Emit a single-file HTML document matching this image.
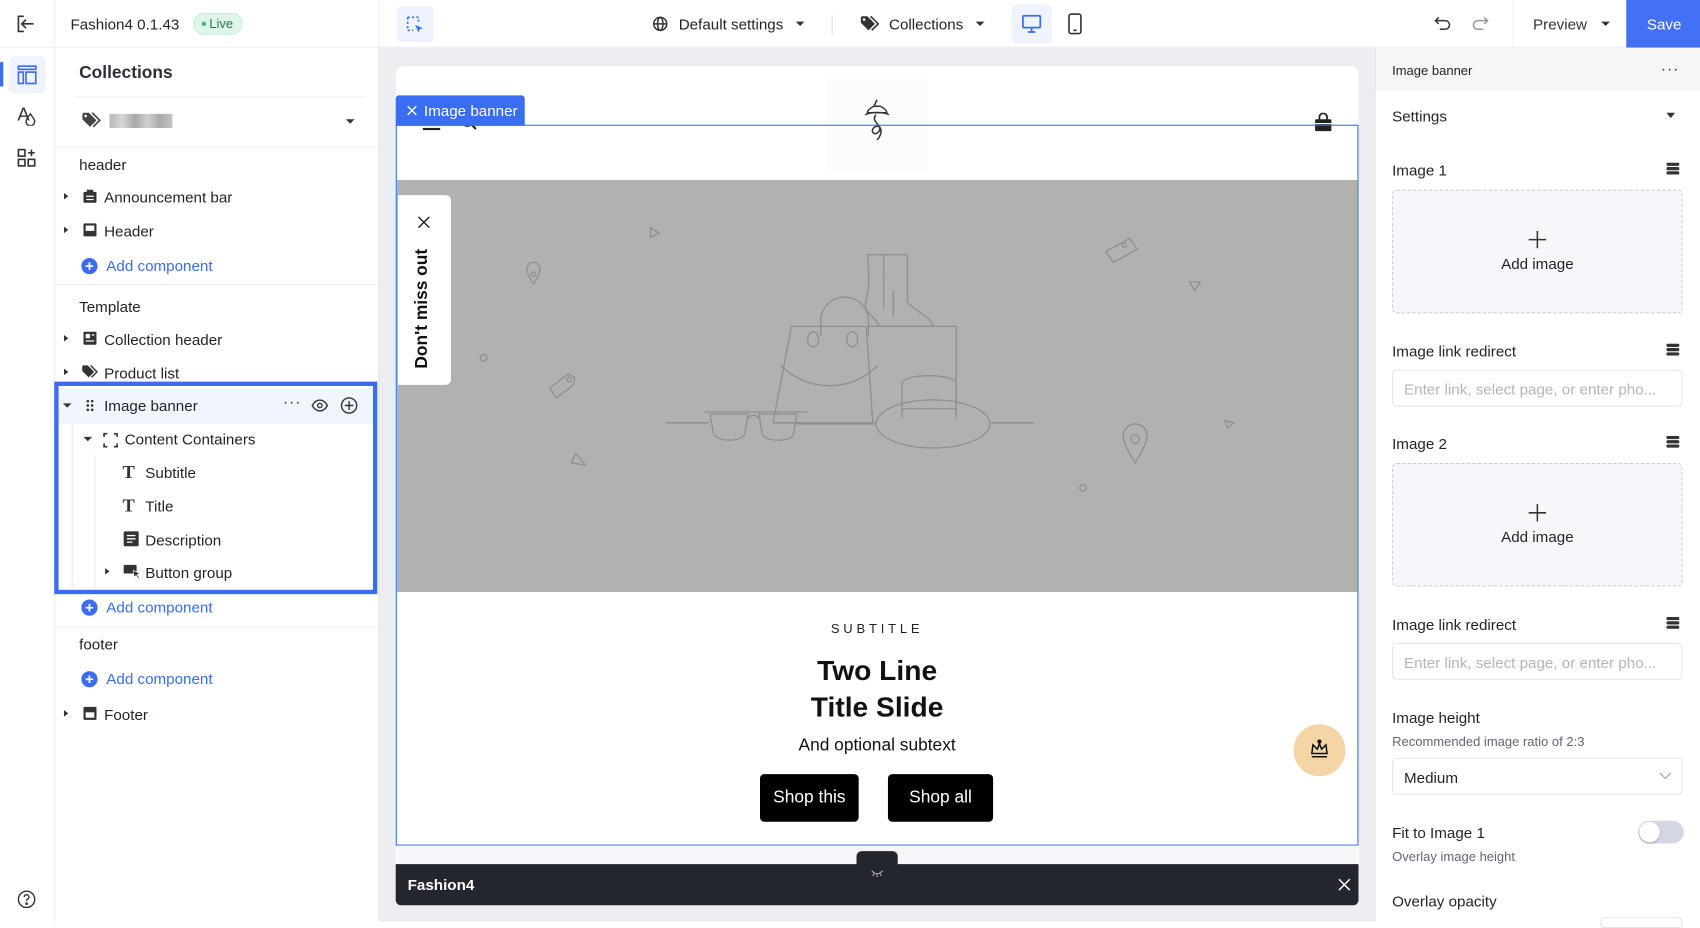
<!DOCTYPE html>
<html><head><meta charset="utf-8"><style>
*{box-sizing:border-box;margin:0;padding:0}
html,body{width:1700px;height:922px;overflow:hidden;background:#fff}
#root{position:absolute;left:0;top:0;width:1568px;height:850px;transform:scale(1.08418);transform-origin:0 0;font-family:"Liberation Sans",sans-serif;color:#1f2329;font-size:14px}
.a{position:absolute}
.t{position:absolute;white-space:nowrap;line-height:1}
.ic{position:absolute}
.tri{position:absolute;width:0;height:0;border-top:3.5px solid transparent;border-bottom:3.5px solid transparent;border-left:4px solid #333}
.trid{position:absolute;width:0;height:0;border-left:4px solid transparent;border-right:4px solid transparent;border-top:4px solid #333}
.add{color:#3a6cf4}
.lbl{font-size:14px;color:#1f2329}
.drop{position:absolute;left:1284px;width:268px;height:114px;border:1px dashed #c9ccd6;border-radius:4px;background:#f6f7fb}
.inp{position:absolute;left:1284px;width:268px;height:34px;border:1px solid #e3e5ea;border-radius:4px;background:#fff}
</style></head><body><div id="root">

<div class="a" style="left:0;top:0;width:1568px;height:44px;background:#fff;border-bottom:1px solid #eceef2"></div>
<div class="a" style="left:50px;top:0;width:1px;height:850px;background:#eceef2"></div>
<div class="a" style="left:349px;top:0;width:1px;height:44px;background:#eceef2"></div>
<svg class="ic" style="left:15px;top:13px" width="18" height="18" viewBox="0 0 18 18" fill="none" stroke="#333" stroke-width="1.5"><path d="M7 2H2v14h5M16 9H6M9 5L5 9l4 4"/></svg>
<div class="t" style="left:65px;top:15px;font-size:14px;color:#1f2329">Fashion4 0.1.43</div>
<div class="a" style="left:178px;top:12px;width:46px;height:20px;border-radius:10px;background:#dff5e8;border:1px solid #c9eed8"></div>
<div class="a" style="left:186px;top:20px;width:4px;height:4px;border-radius:2px;background:#3fb872"></div>
<div class="t" style="left:193px;top:16px;font-size:12px;color:#2a7a4c">Live</div>

<div class="a" style="left:366px;top:6px;width:34px;height:33px;border-radius:4px;background:#eef3fe"></div>
<svg class="ic" style="left:374px;top:14px" width="18" height="18" viewBox="0 0 18 18" fill="none" stroke="#3a6cf4" stroke-width="1.5"><path d="M2 2h10v5M2 2v12h5" stroke-dasharray="2 2"/><path d="M9 9l7 3-3 1-1 3z" fill="#3a6cf4" stroke="none"/></svg>

<svg class="ic" style="left:602px;top:15px" width="14" height="14" viewBox="0 0 14 14" fill="none" stroke="#333" stroke-width="1.4"><circle cx="7" cy="7" r="6"/><ellipse cx="7" cy="7" rx="2.5" ry="6"/><path d="M1 7h12"/></svg>
<div class="t" style="left:626px;top:15px;font-size:14px">Default settings</div>
<div class="trid" style="left:734px;top:20px"></div>
<div class="a" style="left:767px;top:14px;width:1px;height:18px;background:#dcdfe6"></div>
<svg class="ic" style="left:793px;top:14px" width="20" height="16" viewBox="0 0 20 16"><path d="M1 2v5l7 7 6-6-7-7H2z" fill="#333"/><path d="M10 1l7 7-6 6" fill="none" stroke="#333" stroke-width="1.5"/><circle cx="4" cy="4" r="1.2" fill="#fff"/></svg>
<div class="t" style="left:820px;top:15px;font-size:14px">Collections</div>
<div class="trid" style="left:900px;top:20px"></div>
<div class="a" style="left:933px;top:4px;width:37px;height:36px;border-radius:4px;background:#eef3fe"></div>
<svg class="ic" style="left:942px;top:13px" width="19" height="18" viewBox="0 0 19 18" fill="none" stroke="#3a6cf4" stroke-width="1.6"><rect x="1.5" y="1.5" width="16" height="11" rx="1"/><path d="M9.5 13v3M6 16.5h7"/></svg>
<svg class="ic" style="left:985px;top:12px" width="13" height="20" viewBox="0 0 13 20" fill="none" stroke="#333" stroke-width="1.5"><rect x="1" y="1" width="11" height="18" rx="2"/><path d="M5 16h3"/></svg>

<svg class="ic" style="left:1323px;top:14px" width="16" height="16" viewBox="0 0 16 16" fill="none" stroke="#333" stroke-width="1.4"><path d="M4 2L1 5l3 3M1 5h9a4 4 0 010 8H5"/></svg>
<svg class="ic" style="left:1357px;top:14px" width="16" height="16" viewBox="0 0 16 16" fill="none" stroke="#999" stroke-width="1.4"><path d="M12 2l3 3-3 3M15 5H6a4 4 0 000 8h5"/></svg>
<div class="a" style="left:1395px;top:0;width:1px;height:44px;background:#eceef2"></div>
<div class="t" style="left:1414px;top:15px;font-size:14px;color:#333">Preview</div>
<div class="trid" style="left:1477px;top:20px"></div>
<div class="a" style="left:1500px;top:0;width:68px;height:44px;background:#4470f5"></div>
<div class="t" style="left:1519px;top:15px;font-size:14px;color:#fff">Save</div>

<div class="a" style="left:0;top:57px;width:3px;height:23px;background:#3a6cf4;border-radius:2px"></div>
<div class="a" style="left:8px;top:52px;width:34px;height:34px;border-radius:5px;background:#eef3fe"></div>
<svg class="ic" style="left:16px;top:60px" width="18" height="18" viewBox="0 0 18 18" fill="none" stroke="#3a6cf4" stroke-width="1.5"><rect x="1" y="1" width="16" height="3"/><rect x="1" y="6.5" width="4.5" height="10.5"/><rect x="8" y="6.5" width="9" height="10.5"/></svg>
<div class="t" style="left:16px;top:97px;font-size:17px;color:#333">A</div>
<svg class="ic" style="left:23px;top:104px" width="10" height="12" viewBox="0 0 10 12" fill="none" stroke="#333" stroke-width="1.3"><path d="M5 1C3 4 1 6 1 8a4 4 0 008 0c0-2-2-4-4-7z"/></svg>
<svg class="ic" style="left:16px;top:137px" width="17" height="17" viewBox="0 0 17 17" fill="none" stroke="#333" stroke-width="1.5"><rect x="1" y="1" width="6" height="6"/><rect x="1" y="10" width="6" height="6"/><rect x="10" y="10" width="6" height="6"/><path d="M13 1v6M10 4h6"/></svg>
<svg class="ic" style="left:16px;top:821px" width="17" height="17" viewBox="0 0 17 17" fill="none" stroke="#333" stroke-width="1.3"><circle cx="8.5" cy="8.5" r="7.5"/><path d="M6.3 6.5a2.2 2.2 0 114 1.2c-.8.6-1.8 1-1.8 2.2"/><circle cx="8.5" cy="12.5" r=".6" fill="#333"/></svg>

<div class="t" style="left:73px;top:60px;font-size:16px;font-weight:bold;color:#2a2f3a">Collections</div>
<div class="a" style="left:69px;top:89px;width:269px;height:1px;background:#eceef2"></div>
<svg class="ic" style="left:75px;top:103px" width="20" height="16" viewBox="0 0 20 16"><path d="M1 2v5l7 7 6-6-7-7H2z" fill="#444"/><path d="M10 1l7 7-6 6" fill="none" stroke="#444" stroke-width="1.5"/><circle cx="4" cy="4" r="1.2" fill="#fff"/></svg>
<div class="a" style="left:101px;top:105px;width:58px;height:13px;background:linear-gradient(90deg,#b8b8b8,#d6d6d6 20%,#a8a8a8 40%,#cfcfcf 60%,#aaa 80%,#c4c4c4)"></div>
<div class="trid" style="left:319px;top:110px"></div>
<div class="a" style="left:50px;top:135px;width:299px;height:1px;background:#eceef2"></div>
<div class="t" style="left:73px;top:145px">header</div>
<div class="tri" style="left:59px;top:178px"></div>
<svg class="ic" style="left:76px;top:174px" width="14" height="14" viewBox="0 0 14 14"><rect x="1" y="3" width="12" height="10" rx="1" fill="#333"/><rect x="4" y="1" width="6" height="3" fill="#333"/><path d="M3.5 7h7M3.5 10h7" stroke="#fff" stroke-width="1.2"/></svg>
<div class="t" style="left:96px;top:175px">Announcement bar</div>
<div class="tri" style="left:59px;top:209px"></div>
<svg class="ic" style="left:76px;top:205px" width="14" height="14" viewBox="0 0 14 14"><rect x="1" y="1" width="12" height="12" rx="1" fill="#333"/><rect x="3" y="3" width="8" height="5" fill="#fff"/></svg>
<div class="t" style="left:96px;top:206px">Header</div>
<svg class="ic" style="left:75px;top:238px" width="15" height="15" viewBox="0 0 15 15"><circle cx="7.5" cy="7.5" r="7.5" fill="#3a6cf4"/><path d="M7.5 4v7M4 7.5h7" stroke="#fff" stroke-width="1.6"/></svg>
<div class="t add" style="left:98px;top:238px">Add component</div>
<div class="a" style="left:50px;top:262px;width:299px;height:1px;background:#eceef2"></div>
<div class="t" style="left:73px;top:276px">Template</div>
<div class="tri" style="left:59px;top:309px"></div>
<svg class="ic" style="left:76px;top:305px" width="14" height="14" viewBox="0 0 14 14"><rect x="1" y="1" width="12" height="12" rx="1" fill="#333"/><rect x="3" y="3" width="4" height="4" fill="#fff"/><path d="M8.5 4h2.5M3 9.5h8" stroke="#fff" stroke-width="1.2"/></svg>
<div class="t" style="left:96px;top:306px">Collection header</div>
<div class="tri" style="left:59px;top:340px"></div>
<svg class="ic" style="left:75px;top:336px" width="17" height="14" viewBox="0 0 20 16"><path d="M1 2v5l7 7 6-6-7-7H2z" fill="#333"/><path d="M10 1l7 7-6 6" fill="none" stroke="#333" stroke-width="1.5"/></svg>
<div class="t" style="left:96px;top:337px">Product list</div>

<div class="a" style="left:54px;top:358px;width:290px;height:33px;background:#f1f5fe"></div>
<div class="a" style="left:50px;top:352px;width:298px;height:196px;border:4px solid #3a6cf4"></div>
<div class="a" style="left:66px;top:391px;width:1px;height:152px;background:#e3e5ea"></div>
<div class="a" style="left:87px;top:420px;width:1px;height:123px;background:#e3e5ea"></div>
<div class="trid" style="left:58px;top:372px"></div>
<svg class="ic" style="left:79px;top:368px" width="8" height="12" viewBox="0 0 8 12" fill="#333"><circle cx="2" cy="2" r="1.2"/><circle cx="6" cy="2" r="1.2"/><circle cx="2" cy="6" r="1.2"/><circle cx="6" cy="6" r="1.2"/><circle cx="2" cy="10" r="1.2"/><circle cx="6" cy="10" r="1.2"/></svg>
<div class="t" style="left:96px;top:367px">Image banner</div>
<div class="t" style="left:261px;top:363px;font-size:14px;letter-spacing:1px">···</div>
<svg class="ic" style="left:287px;top:368px" width="16" height="12" viewBox="0 0 16 12" fill="none" stroke="#333" stroke-width="1.3"><path d="M1 6c2-3.5 4.5-5 7-5s5 1.5 7 5c-2 3.5-4.5 5-7 5S3 9.5 1 6z"/><circle cx="8" cy="6" r="2"/></svg>
<svg class="ic" style="left:314px;top:366px" width="16" height="16" viewBox="0 0 16 16" fill="none" stroke="#333" stroke-width="1.3"><circle cx="8" cy="8" r="7"/><path d="M8 4v8M4 8h8"/></svg>
<div class="trid" style="left:77px;top:403px"></div>
<svg class="ic" style="left:95px;top:399px" width="14" height="14" viewBox="0 0 14 14" fill="none" stroke="#333" stroke-width="1.5"><path d="M1 4V1h3M10 1h3v3M13 10v3h-3M4 13H1v-3"/></svg>
<div class="t" style="left:115px;top:398px">Content Containers</div>
<div class="t" style="left:113px;top:427px;font-family:'Liberation Serif',serif;font-weight:bold;font-size:17px;color:#333">T</div>
<div class="t" style="left:134px;top:429px">Subtitle</div>
<div class="t" style="left:113px;top:458px;font-family:'Liberation Serif',serif;font-weight:bold;font-size:17px;color:#333">T</div>
<div class="t" style="left:134px;top:460px">Title</div>
<svg class="ic" style="left:114px;top:490px" width="14" height="14" viewBox="0 0 14 14"><rect x="0" y="0" width="14" height="14" rx="1.5" fill="#333"/><path d="M3 4h8M3 7h8M3 10h5" stroke="#fff" stroke-width="1.2"/></svg>
<div class="t" style="left:134px;top:491px">Description</div>
<div class="tri" style="left:97px;top:524px"></div>
<svg class="ic" style="left:114px;top:520px" width="16" height="15" viewBox="0 0 16 15"><rect x="0" y="1" width="12" height="8" rx="1" fill="#333"/><path d="M9 6l6 3-2.5 1 2 3-1 .8-2-3-2 1.5z" fill="#333" stroke="#fff" stroke-width=".6"/></svg>
<div class="t" style="left:134px;top:521px">Button group</div>
<svg class="ic" style="left:75px;top:553px" width="15" height="15" viewBox="0 0 15 15"><circle cx="7.5" cy="7.5" r="7.5" fill="#3a6cf4"/><path d="M7.5 4v7M4 7.5h7" stroke="#fff" stroke-width="1.6"/></svg>
<div class="t add" style="left:98px;top:553px">Add component</div>
<div class="a" style="left:50px;top:578px;width:299px;height:1px;background:#eceef2"></div>
<div class="t" style="left:73px;top:587px">footer</div>
<svg class="ic" style="left:75px;top:619px" width="15" height="15" viewBox="0 0 15 15"><circle cx="7.5" cy="7.5" r="7.5" fill="#3a6cf4"/><path d="M7.5 4v7M4 7.5h7" stroke="#fff" stroke-width="1.6"/></svg>
<div class="t add" style="left:98px;top:619px">Add component</div>
<div class="tri" style="left:59px;top:655px"></div>
<svg class="ic" style="left:76px;top:651px" width="14" height="14" viewBox="0 0 14 14"><rect x="1" y="1" width="12" height="12" rx="1" fill="#333"/><rect x="3" y="6" width="8" height="5" fill="#fff"/></svg>
<div class="t" style="left:96px;top:652px">Footer</div>

<div class="a" style="left:349px;top:44px;width:919px;height:806px;background:#eceef1;border-left:1px solid #e3e5ea"></div>
<div class="a" style="left:365px;top:61px;width:888px;height:736px;background:#fff;border-radius:8px 8px 0 0"></div>
<div class="a" style="left:762px;top:68px;width:94px;height:92px;background:#fcfcfc"></div>
<svg class="ic" style="left:792px;top:90px" width="34" height="46" viewBox="0 0 34 46" fill="none" stroke="#333" stroke-width="1.4"><path d="M17 2l-3 6 2 0M14 8c-4 2-6 4-6 6h18c0-2-2-4-6-6z"/><path d="M6 16c4-3 18-3 22 0"/><path d="M16 16c-6 6 8 10 2 16-4 4-8-2-3-5 6-3 8 6 2 12"/></svg>
<div class="a" style="left:390px;top:118px;width:16px;height:1.8px;background:#222"></div>
<svg class="ic" style="left:424px;top:109px" width="18" height="14" viewBox="0 0 18 14" fill="none" stroke="#222" stroke-width="2"><circle cx="7" cy="2" r="5"/><path d="M11 6l4 4"/></svg>
<svg class="ic" style="left:1212px;top:104px" width="17" height="18" viewBox="0 0 17 18"><rect x="1" y="6" width="15" height="11" rx="1" fill="#222"/><path d="M5 7V4a3.5 3.5 0 017 0v3" fill="none" stroke="#222" stroke-width="1.6"/><path d="M1 10h15" stroke="#fff" stroke-width="1"/></svg>

<div class="a" style="left:366px;top:166px;width:886px;height:380px;background:#b1b1b1"></div>
<svg class="ic" style="left:366px;top:166px" width="886" height="380" viewBox="366 166 886 380" fill="none" stroke="#8f8f8f" stroke-width="1.2">
<path d="M614 390h40M734 390h-4M735 391h73M914 390h40"/>
<path d="M730 301h69l6 89h-92z"/>
<path d="M757 310v-14a22 22 0 0144 0v14"/>
<ellipse cx="750" cy="313" rx="5" ry="7"/><ellipse cx="786" cy="313" rx="5" ry="7"/>
<path d="M720 337c25 25 65 25 90 0"/>
<path d="M800 301h82v80"/>
<path d="M800 235h37v44c10 10 20 12 24 22h-50c-4-10-12-10-13-20 2-10 5-15 2-46zM815 235v50M824 268v24"/>
<path d="M808 391a52 22 0 0 0 105 0a52 22 0 0 0-105 0"/><path d="M832 386v-32c0-10 50-10 50 0v32M832 377h50"/>
<path d="M650 380h95"/>
<path d="M655 382h35l-3 18c-2 8-26 8-29 0z"/><path d="M700 382h35l-3 18c-2 8-26 8-29 0z"/>
<path d="M690 386c3-4 7-4 10 0"/>
<path d="M486 248a6 6 0 0112 0c0 5-6 14-6 14s-6-9-6-14zM1036 402a11 11 0 0122 0c0 8-11 25-11 25s-11-17-11-25z"/>
<circle cx="492" cy="253" r="2"/><circle cx="1047" cy="405" r="4"/>
<circle cx="446" cy="330" r="3"/><circle cx="999" cy="450" r="3"/>
<path d="M600 210l8 5-8 4zM527 427l13 2-9 -11zM1097 260h10l-5 8zM1130 388l8 2-6 5z"/>
<path d="M507 358l17-13 6 3-1 7-16 12z"/><circle cx="525" cy="350" r="2"/>
<path d="M1020 232l22-12 7 10-22 12z"/><circle cx="1037" cy="226" r="2"/>
</svg>
<div class="a" style="left:367px;top:180px;width:49px;height:175px;background:#fff;border-radius:0 5px 5px 0"></div>
<svg class="ic" style="left:385px;top:199px" width="12" height="12" viewBox="0 0 12 12" stroke="#222" stroke-width="1.3"><path d="M1 1l10 10M11 1L1 11"/></svg>
<div class="t" style="left:382px;top:340px;transform:rotate(-90deg);transform-origin:0 0;font-size:16px;font-weight:bold;color:#111">Don't miss out</div>

<div class="a" style="left:365px;top:115px;width:888px;height:665px;border:1.5px solid #3a6cf4"></div>
<div class="a" style="left:365px;top:88px;width:119px;height:28px;background:#3a6cf4;border-radius:3px 3px 0 0"></div>
<svg class="ic" style="left:375px;top:97px" width="10" height="10" viewBox="0 0 10 10" stroke="#fff" stroke-width="1.3"><path d="M1 1l8 8M9 1L1 9"/></svg>
<div class="t" style="left:391px;top:95px;color:#fff;font-size:14px">Image banner</div>

<div class="t" style="left:0;width:1618px;text-align:center;top:574px;font-size:12px;letter-spacing:3.5px;color:#222">SUBTITLE</div>
<div class="t" style="left:0;width:1618px;text-align:center;top:601px;font-size:26px;font-weight:bold;color:#111;line-height:34px">Two Line<br>Title Slide</div>
<div class="t" style="left:0;width:1618px;text-align:center;top:680px;font-size:16px;color:#111">And optional subtext</div>
<div class="a" style="left:701px;top:714px;width:91px;height:44px;background:#000;border-radius:4px"></div>
<div class="t" style="left:701px;width:91px;text-align:center;top:728px;font-size:16px;color:#fff">Shop this</div>
<div class="a" style="left:819px;top:714px;width:97px;height:44px;background:#000;border-radius:4px"></div>
<div class="t" style="left:819px;width:97px;text-align:center;top:728px;font-size:16px;color:#fff">Shop all</div>
<div class="a" style="left:1193px;top:668px;width:48px;height:48px;border-radius:24px;background:#f4d6a6"></div>
<svg class="ic" style="left:1208px;top:681px" width="18" height="20" viewBox="0 0 18 20" fill="none" stroke="#111" stroke-width="1.4"><path d="M2 14l1-8 4 4 2-5 2 5 4-4 1 8zM2 17h14"/><circle cx="9" cy="3" r="1.2" fill="#111"/></svg>

<div class="a" style="left:366px;top:780px;width:886px;height:17px;background:#f4f6f9"></div>
<div class="a" style="left:790px;top:785px;width:38px;height:14px;background:#23252f;border-radius:5px 5px 0 0"></div>
<div class="a" style="left:365px;top:797px;width:888px;height:38px;background:#23252f;border-radius:0 0 5px 5px"></div>
<svg class="ic" style="left:802px;top:801px" width="14" height="8" viewBox="0 0 14 8" fill="none" stroke="#bbb" stroke-width="1"><path d="M2 2c3 4 7 4 10 0M4 5l-1 2M7 6v2M10 5l1 2"/></svg>
<div class="t" style="left:376px;top:809px;color:#fff;font-weight:bold;font-size:14px">Fashion4</div>
<svg class="ic" style="left:1234px;top:810px" width="12" height="12" viewBox="0 0 12 12" stroke="#fff" stroke-width="1.4"><path d="M1 1l10 10M11 1L1 11"/></svg>

<div class="a" style="left:1268px;top:44px;width:300px;height:40px;background:#f5f6f8"></div>
<div class="a" style="left:1268px;top:44px;width:1px;height:806px;background:#e3e5ea"></div>
<div class="t" style="left:1284px;top:59px;font-size:12px;color:#1f2329">Image banner</div>
<div class="t" style="left:1532px;top:56px;font-size:14px;letter-spacing:1px">···</div>
<div class="t" style="left:1284px;top:100px;font-size:14px">Settings</div>
<div class="trid" style="left:1537px;top:104px;border-top-width:5px"></div>
<svg class="ic" style="left:1537px;top:150px" width="12" height="11" viewBox="0 0 12 11" fill="#333"><rect x="0" y="0" width="12" height="3" rx="1.5"/><rect x="0" y="4" width="12" height="3" rx="1.5"/><rect x="0" y="8" width="12" height="3" rx="1.5"/></svg>
<div class="t lbl" style="left:1284px;top:150px">Image 1</div>
<div class="drop" style="top:175px"></div>
<svg class="ic" style="left:1409px;top:212px" width="18" height="18" viewBox="0 0 18 18" stroke="#333" stroke-width="1.4"><path d="M9 1v16M1 9h16"/></svg>
<div class="t" style="left:1284px;width:268px;text-align:center;top:236px">Add image</div>
<div class="t lbl" style="left:1284px;top:317px">Image link redirect</div>
<svg class="ic" style="left:1537px;top:317px" width="12" height="11" viewBox="0 0 12 11" fill="#333"><rect x="0" y="0" width="12" height="3" rx="1.5"/><rect x="0" y="4" width="12" height="3" rx="1.5"/><rect x="0" y="8" width="12" height="3" rx="1.5"/></svg>
<div class="inp" style="top:341px"></div>
<div class="t" style="left:1295px;top:352px;color:#b0b5c2">Enter link, select page, or enter pho...</div>
<div class="t lbl" style="left:1284px;top:402px">Image 2</div>
<svg class="ic" style="left:1537px;top:402px" width="12" height="11" viewBox="0 0 12 11" fill="#333"><rect x="0" y="0" width="12" height="3" rx="1.5"/><rect x="0" y="4" width="12" height="3" rx="1.5"/><rect x="0" y="8" width="12" height="3" rx="1.5"/></svg>
<div class="drop" style="top:427px"></div>
<svg class="ic" style="left:1409px;top:464px" width="18" height="18" viewBox="0 0 18 18" stroke="#333" stroke-width="1.4"><path d="M9 1v16M1 9h16"/></svg>
<div class="t" style="left:1284px;width:268px;text-align:center;top:488px">Add image</div>
<div class="t lbl" style="left:1284px;top:569px">Image link redirect</div>
<svg class="ic" style="left:1537px;top:569px" width="12" height="11" viewBox="0 0 12 11" fill="#333"><rect x="0" y="0" width="12" height="3" rx="1.5"/><rect x="0" y="4" width="12" height="3" rx="1.5"/><rect x="0" y="8" width="12" height="3" rx="1.5"/></svg>
<div class="inp" style="top:593px"></div>
<div class="t" style="left:1295px;top:604px;color:#b0b5c2">Enter link, select page, or enter pho...</div>
<div class="t lbl" style="left:1284px;top:655px">Image height</div>
<div class="t" style="left:1284px;top:678px;font-size:12px;color:#5f6677">Recommended image ratio of 2:3</div>
<div class="inp" style="top:699px"></div>
<div class="t" style="left:1295px;top:710px">Medium</div>
<svg class="ic" style="left:1530px;top:712px" width="12" height="8" viewBox="0 0 12 8" fill="none" stroke="#aaa" stroke-width="1.2"><path d="M1 1l5 5 5-5"/></svg>
<div class="t lbl" style="left:1284px;top:761px">Fit to Image 1</div>
<div class="a" style="left:1511px;top:757px;width:42px;height:21px;border-radius:11px;background:#d4d7e3"></div>
<div class="a" style="left:1512px;top:758px;width:19px;height:19px;border-radius:10px;background:#fff;box-shadow:0 1px 2px rgba(0,0,0,.25)"></div>
<div class="t" style="left:1284px;top:784px;font-size:12px;color:#5f6677">Overlay image height</div>
<div class="t lbl" style="left:1284px;top:824px">Overlay opacity</div>
<div class="a" style="left:1476px;top:846px;width:76px;height:10px;border:1px solid #e3e5ea;border-radius:4px"></div>

</div></body></html>
